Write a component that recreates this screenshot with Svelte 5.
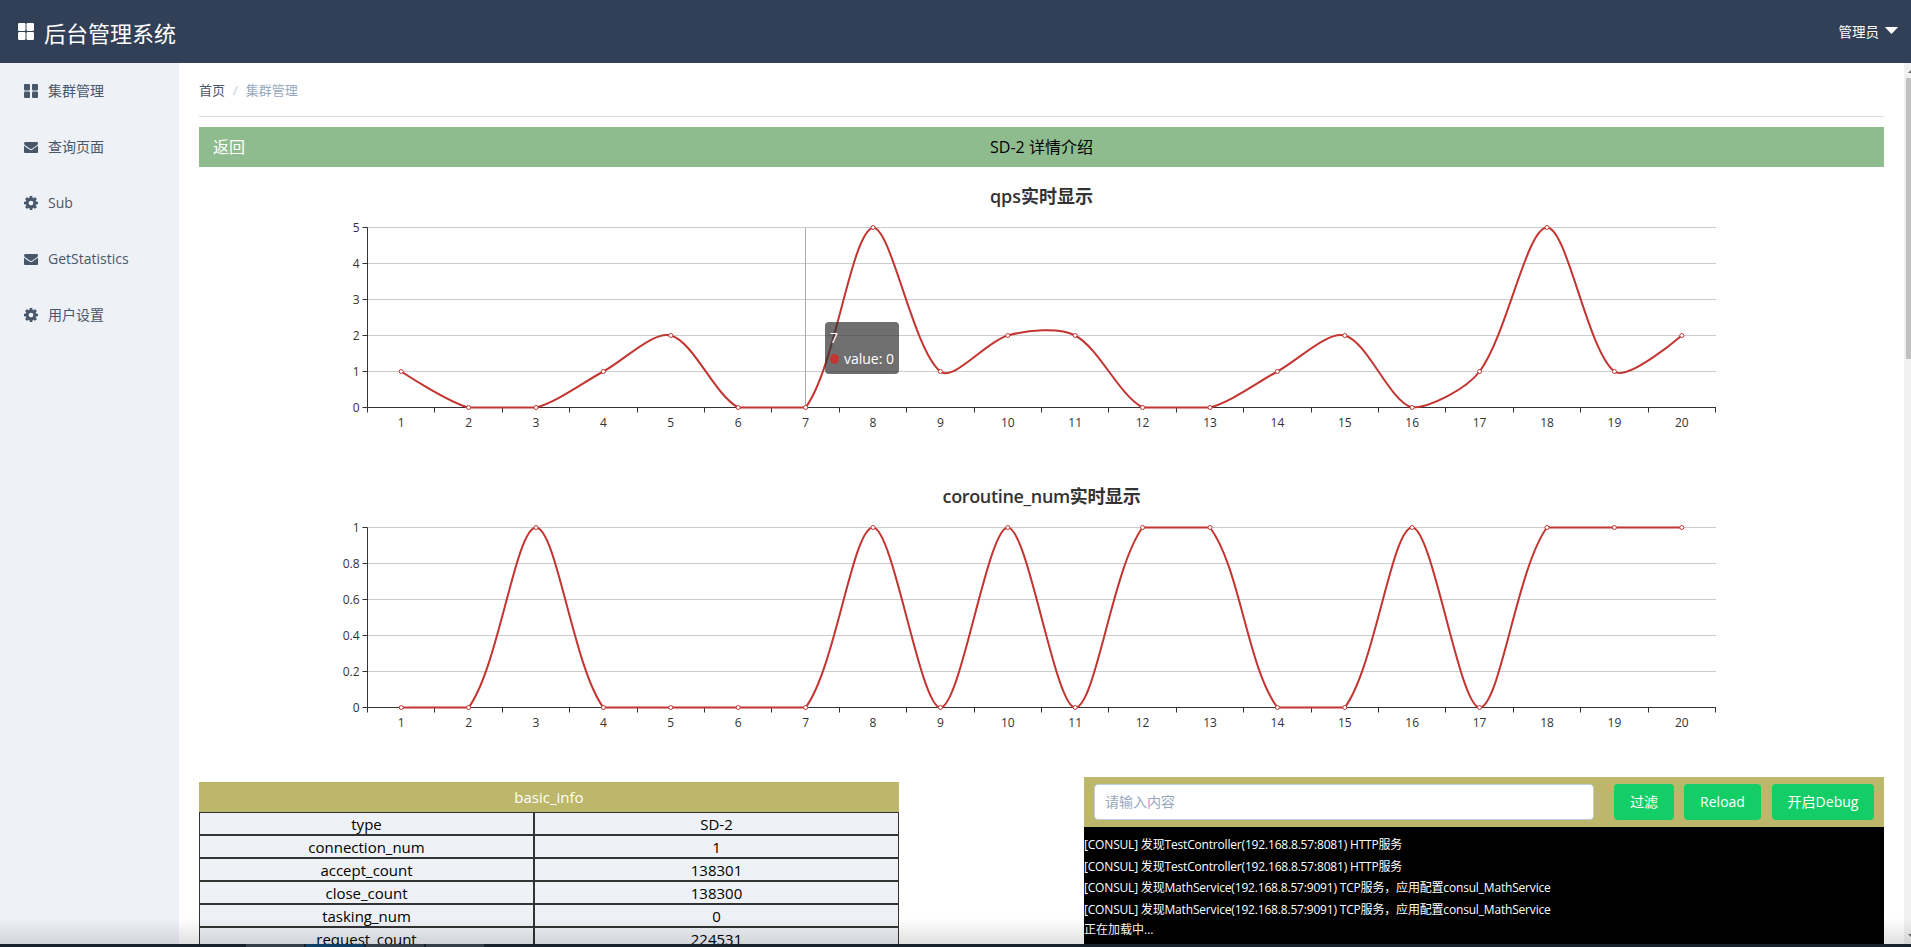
<script>
  const W = 1685, X0 = 168.5, X1 = 1516.5, Y0 = 60.5, Y1 = 240.5;
  const STEP = (X1 - X0) / 20;
  const SMOOTH = 0.3;
  const crisp = (v) => Math.floor(v) + 0.5;

  function build(title, data, max, labels) {
    const pts = data.map((v, i) => [X0 + STEP * (i + 0.5), Y1 - ((Y1 - Y0) * v) / max]);
    const minX = pts[0][0], maxX = pts[pts.length - 1][0];
    const clamp = (p) => [Math.min(maxX, Math.max(minX, p[0])), Math.min(Y1, Math.max(Y0, p[1]))];
    let d = `M${pts[0][0]} ${pts[0][1]}`;
    let cp0 = pts[0];
    for (let i = 1; i < pts.length; i++) {
      const p = pts[i], prev = pts[i - 1], next = pts[i + 1];
      let nextCp = p, ratio = 0.5;
      if (next) {
        const v = [next[0] - prev[0], next[1] - prev[1]];
        const a = Math.hypot(p[0] - prev[0], p[1] - prev[1]);
        const b = Math.hypot(p[0] - next[0], p[1] - next[1]);
        ratio = b / (a + b);
        nextCp = clamp([p[0] + v[0] * SMOOTH * ratio, p[1] + v[1] * SMOOTH * ratio]);
        const c1 = clamp([p[0] - v[0] * SMOOTH * (1 - ratio), p[1] - v[1] * SMOOTH * (1 - ratio)]);
        d += `C${cp0[0]} ${cp0[1]} ${c1[0]} ${c1[1]} ${p[0]} ${p[1]}`;
      } else {
        d += `C${cp0[0]} ${cp0[1]} ${p[0]} ${p[1]} ${p[0]} ${p[1]}`;
      }
      cp0 = nextCp;
    }
    const rows = labels.map((l, i) => ({ l, y: Y0 + ((Y1 - Y0) * i) / (labels.length - 1) }));
    const ticks = Array.from({ length: 21 }, (_, i) => crisp(X0 + STEP * i));
    return { title, d, pts, rows, ticks };
  }

  const charts = [
    build('qps实时显示', [1,0,0,1,2,0,0,5,1,2,2,0,0,1,2,0,1,5,1,2], 5, ['5','4','3','2','1','0']),
    build('coroutine_num实时显示', [0,0,1,0,0,0,0,1,0,1,0,1,1,0,0,1,0,1,1,1], 1, ['1','0.8','0.6','0.4','0.2','0'])
  ];

  const menu = [
    { name: '集群管理', icon: 'th' },
    { name: '查询页面', icon: 'mail' },
    { name: 'Sub', icon: 'cog' },
    { name: 'GetStatistics', icon: 'mail' },
    { name: '用户设置', icon: 'cog' }
  ];

  const icons = {
    mail: 'M1792 710v794q0 66-47 113t-113 47h-1472q-66 0-113-47t-47-113v-794q44 49 101 87 362 246 497 345 57 42 92.5 65.5t94.5 48 110 24.5h2q51 0 110-24.5t94.5-48 92.5-65.5q170-123 498-345 57-39 100-87zm0-294q0 79-49 151t-122 123q-376 261-468 325-10 7-42.5 30.5t-54 38-52 32.5-57.5 27-50 9h-2q-23 0-50-9t-57.5-27-52-32.5-54-38-42.5-30.5q-91-64-262-182.5t-205-142.5q-62-42-117-115.5t-55-136.5q0-78 41.5-130t118.5-52h1472q65 0 112.5 47t47.5 113z',
    cog: 'M1152 896q0-106-75-181t-181-75-181 75-75 181 75 181 181 75 181-75 75-181zm512-109v222q0 12-8 23t-20 13l-185 28q-19 54-39 91 35 50 107 138 10 12 10 25t-9 23q-27 37-99 108t-94 71q-12 0-26-9l-138-108q-44 23-91 38-16 136-29 186-7 28-36 28h-222q-14 0-24.5-8.5t-11.5-21.5l-28-184q-49-16-90-37l-141 107q-10 9-25 9-14 0-25-11-126-114-165-168-7-10-7-23 0-12 8-23 15-21 51-66.5t54-70.5q-27-50-41-99l-183-27q-13-2-21-12.5t-8-23.5v-222q0-12 8-23t19-13l186-28q14-46 39-92-40-57-107-138-10-12-10-24 0-10 9-23 26-36 98.5-107.5t94.5-71.5q13 0 26 10l138 107q44-23 91-38 16-136 29-186 7-28 36-28h222q14 0 24.5 8.5t11.5 21.5l28 184q49 16 90 37l142-107q9-9 24-9 13 0 25 10 129 119 165 170 7 8 7 22 0 12-8 23-15 21-51 66.5t-54 70.5q26 50 41 98l183 28q13 2 21 12.5t8 23.5z'
  };

  const info = [
    ['type', 'SD-2'],
    ['connection_num', '1'],
    ['accept_count', '138301'],
    ['close_count', '138300'],
    ['tasking_num', '0'],
    ['request_count', '224531']
  ];

  const logs = [
    '[CONSUL] 发现TestController(192.168.8.57:8081) HTTP服务',
    '[CONSUL] 发现TestController(192.168.8.57:8081) HTTP服务',
    '[CONSUL] 发现MathService(192.168.8.57:9091) TCP服务，应用配置consul_MathService',
    '[CONSUL] 发现MathService(192.168.8.57:9091) TCP服务，应用配置consul_MathService'
  ];
</script>

<div class="app">
  <header class="topbar">
    <div class="brand">
      <svg class="logo" viewBox="0 0 16 17">
        <rect x="0" y="0" width="7.5" height="8" rx="1.2" />
        <rect x="8.5" y="0" width="7.5" height="8" rx="1.2" />
        <rect x="0" y="9" width="7.5" height="8" rx="1.2" />
        <rect x="8.5" y="9" width="7.5" height="8" rx="1.2" />
      </svg>
      <span>后台管理系统</span>
    </div>
    <div class="user">
      <span>管理员</span>
      <svg class="caret" viewBox="0 0 13 7"><path d="M.8 0h11.4q.8 0 .5.6L7 6.6q-.5.4-1 0L.3.6Q0 0 .8 0z" /></svg>
    </div>
  </header>

  <div class="body">
    <nav class="side">
      {#each menu as m}
        <div class="item">
          {#if m.icon === 'th'}
            <svg class="ico" viewBox="0 0 14 14">
              <rect x="0" y="0" width="6" height="6.6" rx="1" />
              <rect x="8" y="0" width="6" height="6.6" rx="1" />
              <rect x="0" y="7.4" width="6" height="6.6" rx="1" />
              <rect x="8" y="7.4" width="6" height="6.6" rx="1" />
            </svg>
          {:else if m.icon === 'cog'}
            <svg class="ico" viewBox="128 128 1536 1536"><path d={icons.cog} /></svg>
          {:else}
            <svg class="ico" viewBox="0 0 1792 1792"><path d={icons.mail} /></svg>
          {/if}
          <span class="label">{m.name}</span>
        </div>
      {/each}
    </nav>

    <main class="main">
      <div class="crumb">
        <span class="c1">首页</span><span class="sep">/</span><span class="c2">集群管理</span>
      </div>
      <div class="rule"></div>

      <div class="bar">
        <span class="back">返回</span>
        <span class="bar-title">SD-2 详情介绍</span>
      </div>

      {#each charts as c, ci}
        <div class="chart">
          <svg width={W} height="300" viewBox="0 0 {W} 300">
            <text class="title" class:tight={ci === 1} x={W / 2} y="36" text-anchor="middle">{c.title}</text>
            {#each c.rows as r, i}
              {#if i < c.rows.length - 1}
                <line class="split" x1={X0} x2={X1 + 0.5} y1={r.y} y2={r.y} />
              {/if}
              <line class="axis" x1={X0 - 5} x2={X0} y1={r.y} y2={r.y} />
              <text class="lab" x={X0 - 8} y={r.y + 4.5} text-anchor="end">{r.l}</text>
            {/each}
            <line class="axis" x1={X0} x2={X0} y1={Y0} y2={Y1} />
            <line class="axis" x1={X0} x2={X1 + 0.5} y1={Y1} y2={Y1} />
            {#each c.ticks as t}
              <line class="axis" x1={t} x2={t} y1={Y1} y2={Y1 + 5} />
            {/each}
            {#each c.pts as p, i}
              <text class="lab" x={p[0]} y={Y1 + 19} text-anchor="middle">{i + 1}</text>
            {/each}
            {#if ci === 0}
              <line class="pointer" x1="606.5" x2="606.5" y1={Y0} y2={Y1} />
            {/if}
            <path class="series" d={c.d} />
            {#each c.pts as p}
              <circle class="dot" cx={p[0]} cy={p[1]} r="2" />
            {/each}
          </svg>
          {#if ci === 0}
            <div class="tip">
              <div>7</div>
              <div class="tip-row"><i class="tip-dot"></i>value: 0</div>
            </div>
          {/if}
        </div>
      {/each}

      <div class="lower">
        <div class="info">
          <div class="info-head">basic_info</div>
          <table>
            <tbody>
              {#each info as row}
                <tr><td class="k">{row[0]}</td><td>{row[1]}</td></tr>
              {/each}
            </tbody>
          </table>
        </div>

        <div class="console">
          <div class="tools">
            <input class="filter" placeholder="请输入内容" />
            <button class="b1">过滤</button>
            <button class="b2">Reload</button>
            <button class="b3">开启Debug</button>
          </div>
          <div class="log">
            {#each logs as l}<div class="line">{l}</div>{/each}
            <div class="loading">正在加载中...</div>
          </div>
        </div>
      </div>
    </main>

    <div class="scroll">
      <i class="up"></i>
      <div class="thumb"></div>
      <i class="down"></i>
    </div>
  </div>

  <div class="shade"></div>
  <div class="strip">
    <i class="seg"></i><i class="seg blue"></i><i class="seg"></i><i class="seg"></i>
  </div>
</div>

<style>
  :global(body) {
    margin: 0;
    overflow: hidden;
    background: #fff;
  }
  .app {
    position: relative;
    width: 1911px;
    height: 947px;
    overflow: hidden;
    display: flex;
    flex-direction: column;
    font-family: "Open Sans", "Noto Sans CJK SC", sans-serif;
    color: #000;
  }
  .topbar {
    flex: 0 0 63px;
    background: #324057;
    color: #fff;
    display: flex;
    align-items: center;
    justify-content: space-between;
    padding: 0 13px 0 18px;
  }
  .brand {
    display: flex;
    align-items: center;
    gap: 10px;
    font-size: 22px;
  }
  .logo {
    width: 16px;
    height: 17px;
    fill: #fff;
  }
  .user {
    display: flex;
    align-items: center;
    gap: 6px;
    font-size: 13.5px;
    margin-top: -2px;
  }
  .caret {
    width: 13px;
    height: 7px;
    fill: #fff;
  }
  .body {
    flex: 1;
    min-height: 0;
    display: flex;
  }
  .side {
    flex: 0 0 179px;
    background: #eef1f6;
  }
  .item {
    height: 56px;
    display: flex;
    align-items: center;
    gap: 10px;
    padding-left: 24px;
    font-size: 14px;
    color: #48576a;
  }
  .label {
    padding-bottom: 2px;
  }
  .ico {
    width: 14px;
    height: 14px;
    fill: #48576a;
  }
  .main {
    flex: 1;
    min-width: 0;
    overflow: hidden;
    padding: 20px 20px 0;
    font-size: 14px;
  }
  .crumb {
    font-size: 13px;
    line-height: 14px;
    margin-bottom: 19px;
  }
  .c1 { color: #48576a; }
  .c2 { color: #97a8be; }
  .sep {
    color: #bfcbd9;
    margin: 0 8px;
  }
  .rule {
    height: 1px;
    background: #dcdcdc;
    margin-bottom: 10px;
  }
  .bar {
    position: relative;
    height: 40px;
    box-sizing: border-box;
    padding-bottom: 2px;
    background: #8fbc8f;
    display: flex;
    align-items: center;
    justify-content: center;
    font-size: 16px;
  }
  .back {
    position: absolute;
    left: 14px;
    color: #fff;
  }
  .chart {
    position: relative;
    height: 300px;
  }
  .chart svg {
    display: block;
  }
  .title {
    font-size: 18px;
    font-weight: 600;
    fill: #333;
  }
  .tight {
    letter-spacing: -0.35px;
  }
  .lab {
    font-size: 12px;
    fill: #333;
  }
  .split {
    stroke: #ccc;
    stroke-width: 1;
  }
  .axis {
    stroke: #333;
    stroke-width: 1;
  }
  .pointer {
    stroke: #aaa;
    stroke-width: 1;
  }
  .series {
    fill: none;
    stroke: #c23531;
    stroke-width: 2;
    stroke-linejoin: bevel;
  }
  .dot {
    fill: #fff;
    stroke: #c23531;
    stroke-width: 1;
  }
  .tip {
    position: absolute;
    left: 626px;
    top: 155px;
    width: 64px;
    padding: 5px;
    border-radius: 4px;
    background: rgba(50, 50, 50, 0.7);
    color: #fff;
    font-size: 14px;
    line-height: 21px;
  }
  .tip-row {
    white-space: nowrap;
    display: flex;
    align-items: center;
  }
  .tip-dot {
    width: 10px;
    height: 10px;
    border-radius: 50%;
    background: #c23531;
    margin-right: 5px;
  }
  .lower {
    display: flex;
    justify-content: space-between;
    align-items: flex-start;
    margin-top: 10px;
  }
  .info {
    width: 700px;
    margin-top: 5px;
    text-align: center;
  }
  .info-head {
    height: 30px;
    line-height: 31px;
    background: #bdb76b;
    color: #fff;
    font-size: 15px;
  }
  table {
    width: 100%;
    border-collapse: separate;
    border-spacing: 0;
    table-layout: fixed;
    border: 1px solid #333;
    box-sizing: border-box;
    font-size: 15px;
    line-height: 19px;
  }
  td {
    height: 19px;
    padding: 2px 0 0;
    background: #eef1f6;
    border: 1px solid #333;
    border-width: 0 0 2px 0;
    color: #000;
    overflow: hidden;
    white-space: nowrap;
  }
  tr td {
    box-sizing: content-box;
  }
  .k {
    width: 333px;
    border-right-width: 2px;
  }
  .console {
    width: 800px;
  }
  .tools {
    height: 50px;
    box-sizing: border-box;
    background: #bdb76b;
    padding: 7px 10px;
    display: flex;
  }
  .filter {
    width: 500px;
    height: 36px;
    box-sizing: border-box;
    padding: 1px 10px 3px;
    border: 1px solid #bfcbd9;
    border-radius: 4px;
    background: #fff;
    font: inherit;
    font-size: 14px;
    outline: none;
  }
  .filter::placeholder {
    color: #97a8be;
    opacity: 1;
  }
  button {
    height: 36px;
    padding: 0 0 2px;
    border: 0;
    border-radius: 4px;
    background: #13ce66;
    color: #fff;
    font: inherit;
    font-size: 14px;
  }
  .b1 { width: 60px; margin-left: 20px; }
  .b2 { width: 77px; margin-left: 10px; }
  .b3 { width: 102px; margin-left: 11px; }
  .log {
    height: 200px;
    background: #000;
    color: #fff;
    font-size: 12px;
    padding-top: 7px;
  }
  .line {
    line-height: 21.6px;
    letter-spacing: -0.18px;
  }
  .loading {
    line-height: 18px;
    margin-top: 1px;
  }
  .scroll {
    flex: 0 0 7px;
    background: #f1f1f1;
    position: relative;
  }
  .thumb {
    position: absolute;
    left: 2px;
    right: 0;
    top: 15px;
    height: 281px;
    background: #c1c1c1;
  }
  .up, .down {
    position: absolute;
    right: 0;
    width: 0;
    height: 0;
    border-left: 3px solid transparent;
    border-right: 0 solid transparent;
  }
  .up {
    top: 7px;
    border-bottom: 3px solid #6a6a6a;
  }
  .down {
    top: 871px;
    border-top: 3px solid #6a6a6a;
  }
  .shade {
    position: absolute;
    left: 0;
    right: 0;
    bottom: 3px;
    height: 26px;
    background: linear-gradient(rgba(0, 0, 0, 0), rgba(0, 0, 0, 0.12));
    pointer-events: none;
  }
  .strip {
    position: absolute;
    left: 0;
    right: 0;
    bottom: 0;
    height: 3px;
    background: #16222c;
    display: flex;
    gap: 2px;
    padding-left: 246px;
  }
  .seg {
    width: 58px;
    background: #333f49;
  }
  .seg.blue {
    background: #0f3f66;
  }
</style>
